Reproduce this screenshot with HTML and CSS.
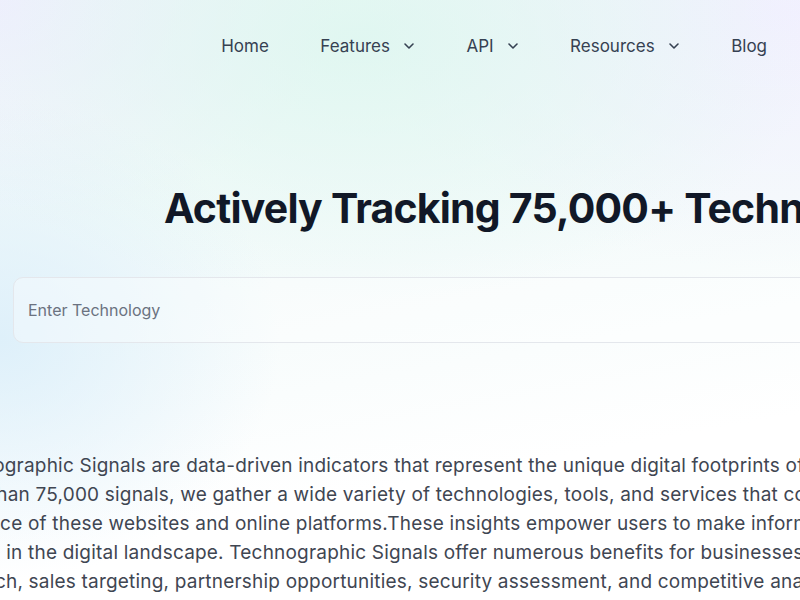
FILE: index.html
```html
<!DOCTYPE html>
<html lang="en">
<head>
<meta charset="utf-8">
<title>Technographic Signals</title>
<link rel="stylesheet" href="styles.css">
</head>
<body>
<div class="page">
  <header class="nav">
    <a class="nav-item" href="#">Home</a>
    <a class="nav-item" href="#">Features <svg class="chev" viewBox="0 0 12 12"><path d="M2 4l4 4 4-4"/></svg></a>
    <a class="nav-item" href="#">API <svg class="chev" viewBox="0 0 12 12"><path d="M2 4l4 4 4-4"/></svg></a>
    <a class="nav-item" href="#">Resources <svg class="chev" viewBox="0 0 12 12"><path d="M2 4l4 4 4-4"/></svg></a>
    <a class="nav-item" href="#">Blog</a>
  </header>
  <main class="hero">
    <h1 class="title">Actively Tracking 75,000+ Technologies</h1>
    <div class="search">
      <input class="search-input" type="text" placeholder="Enter Technology">
    </div>
    <p class="intro">Technographic Signals are data-driven indicators that represent the unique digital footprints of websites.<br>More than 75,000 signals, we gather a wide variety of technologies, tools, and services that contribute to the online<br>presence of these websites and online platforms.These insights empower users to make informed decisions and drive<br>growth in the digital landscape. Technographic Signals offer numerous benefits for businesses, researchers and marketers, such as market<br>research, sales targeting, partnership opportunities, security assessment, and competitive analysis.</p>
  </main>
</div>
</body>
</html>
```
FILE: styles.css
```css
html, body {
  margin: 0;
  padding: 0;
}
body {
  width: 800px;
  height: 600px;
  overflow: hidden;
  font-family: Inter, "Liberation Sans", sans-serif;
  background:
    radial-gradient(ellipse 460px 260px at 360px 40px, rgba(220, 246, 239, 0.8), rgba(220, 246, 239, 0) 100%),
    radial-gradient(ellipse 280px 240px at 0px 340px, rgba(218, 238, 250, 0.85), rgba(218, 238, 250, 0) 100%),
    radial-gradient(ellipse 340px 230px at 0px 0px, rgba(241, 238, 255, 1), rgba(241, 238, 255, 0) 100%),
    radial-gradient(ellipse 420px 260px at 780px 10px, rgba(242, 240, 255, 1), rgba(242, 240, 255, 0) 100%),
    linear-gradient(170deg, #eff9f7 0%, #f5fbfb 45%, #ffffff 75%);
}
.page {
  display: flex;
  flex-direction: column;
}
.nav {
  display: flex;
  justify-content: flex-end;
  align-items: center;
  gap: 51.5px;
  padding: 34px 33px 0 0;
  height: 24px;
}
.nav-item {
  display: flex;
  align-items: center;
  gap: 13px;
  font-size: 17px;
  color: #364152;
  text-decoration: none;
}
.chev {
  width: 12px;
  height: 12px;
  fill: none;
  stroke: #364152;
  stroke-width: 1.6;
  stroke-linecap: round;
  stroke-linejoin: round;
}
.hero {
  display: flex;
  flex-direction: column;
}
.title {
  margin: 122px 0 0 164px;
  font-size: 41px;
  line-height: 56px;
  font-weight: 700;
  letter-spacing: -0.8px;
  color: #111827;
  white-space: nowrap;
}
.search {
  margin: 41px 0 0 13px;
  width: 1000px;
  height: 64px;
  border: 1px solid #e4e7ec;
  border-radius: 10px;
  background: rgba(255, 255, 255, 0.35);
  display: flex;
  align-items: center;
}
.search-input {
  border: none;
  outline: none;
  background: transparent;
  font-family: inherit;
  font-size: 16px;
  color: #111827;
  padding: 0 0 0 14px;
  width: 600px;
}
.search-input::placeholder {
  color: #6b7280;
}
.intro {
  margin: 108px 0 0 -63px;
  font-size: 19px;
  line-height: 29px;
  letter-spacing: 0.2px;
  color: #3f4652;
  white-space: nowrap;
}
```
